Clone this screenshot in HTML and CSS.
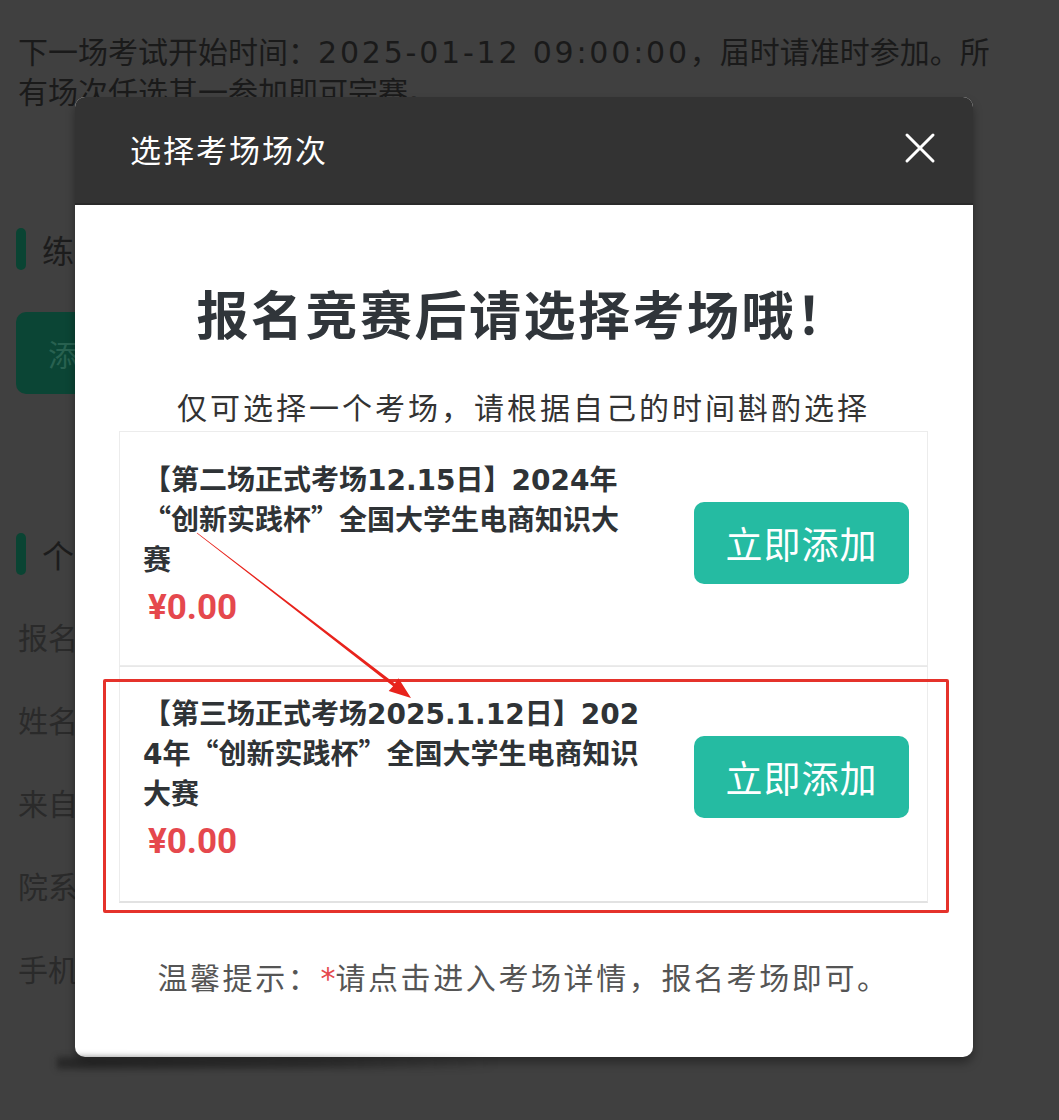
FILE: index.html
```html
<!DOCTYPE html>
<html lang="zh-CN">
<head>
<meta charset="utf-8">
<title>选择考场场次</title>
<link rel="stylesheet" href="styles.css">
</head>
<body>
<div class="page">
  <p class="notice">下一场考试开始时间：<span class="num">2025-01-12 09:00:00</span>，届时请准时参加。所有场次任选其一参加即可完赛。</p>
  <div class="section-title"><span class="bar"></span>练习考场</div>
  <div class="add-btn">添加练习考场</div>
  <div class="section-title second"><span class="bar"></span>个人信息</div>
  <ul class="info">
    <li>报名状态：已报名</li>
    <li>姓名：</li>
    <li>来自：</li>
    <li>院系：</li>
    <li>手机号：</li>
  </ul>
</div>

<div class="modal">
  <div class="modal-header">
    <span class="modal-title">选择考场场次</span>
    <svg class="close" width="32" height="32" viewBox="0 0 32 32"><path d="M3 3 L29 29 M29 3 L3 29" stroke="#fff" stroke-width="3" stroke-linecap="round" fill="none"/></svg>
  </div>
  <div class="modal-body">
    <h2 class="heading">报名竞赛后请选择考场哦！</h2>
    <p class="subtitle">仅可选择一个考场，请根据自己的时间斟酌选择</p>
    <div class="card">
      <div class="card-info">
        <div class="card-title">【第二场正式考场<span class="num">12.15</span>日】<span class="num">2024</span>年“创新实践杯”全国大学生电商知识大赛</div>
        <div class="price">¥0.00</div>
      </div>
      <div class="btn">立即添加</div>
    </div>
    <div class="card last">
      <div class="card-info">
        <div class="card-title">【第三场正式考场<span class="num">2025.1.12</span>日】<span class="num">2024</span>年“创新实践杯”全国大学生电商知识大赛</div>
        <div class="price">¥0.00</div>
      </div>
      <div class="btn">立即添加</div>
    </div>
    <p class="tip">温馨提示：<span class="star">*</span>请点击进入考场详情，报名考场即可。</p>
  </div>
  <div class="mark-frame"></div>
</div>

<svg class="arrow" width="1059" height="1120" viewBox="0 0 1059 1120">
  <polygon points="197.2,532.8 394.9,683.4 398.5,678.3 411,698 388.7,690.9 393.1,686.2 196.8,533.2" fill="#e8231c"/>
</svg>
</body>
</html>
```
FILE: styles.css
```css
* { box-sizing: border-box; }
html, body {
  margin: 0;
  padding: 0;
  background: #404040;
  width: 1059px;
  height: 1120px;
  overflow: hidden;
  font-family: "Noto Sans CJK SC", "Noto Sans", sans-serif;
}
body { position: relative; }

.page {
  padding: 30px 18px 0 18px;
}
.notice {
  margin: 0;
  width: 1000px;
  font-size: 30px;
  line-height: 40px;
  color: #1a1a1a;
}
.notice .num {
  font-family: "DejaVu Sans", sans-serif;
  letter-spacing: 2.8px;
  line-height: 1;
}
.section-title {
  display: flex;
  align-items: center;
  margin: 118px 0 0 -2px;
  height: 42px;
  font-size: 32px;
  color: #1c1c1c;
}
.section-title.second { margin-top: 139px; }
.bar {
  width: 10px;
  height: 42px;
  border-radius: 5px;
  background: #0a4433;
  margin-right: 16px;
}
.add-btn {
  margin: 42px 0 0 -2px;
  width: 300px;
  height: 82px;
  border-radius: 10px;
  background: #0b4535;
  color: #286150;
  font-size: 30px;
  display: flex;
  align-items: center;
  padding-left: 32px;
}
.info {
  list-style: none;
  margin: 20px 0 0 0;
  padding: 0;
}
.info li {
  height: 83px;
  line-height: 83px;
  font-size: 30px;
  color: #2a2a2a;
}

.modal {
  position: absolute;
  left: 75px;
  top: 97px;
  width: 898px;
  height: 960px;
  background: #fff;
  border-radius: 10px;
  box-shadow: 0 6px 10px rgba(0,0,0,0.35);
  display: flex;
  flex-direction: column;
}
.modal::after {
  content: "";
  position: absolute;
  left: -18px;
  bottom: -12px;
  width: 440px;
  height: 12px;
  background: linear-gradient(to right, rgba(20,20,20,0.55), rgba(20,20,20,0.35) 60%, rgba(20,20,20,0));
  filter: blur(3px);
  pointer-events: none;
}
.modal-header {
  height: 108px;
  background: #333333;
  border-radius: 10px 10px 0 0;
  border-bottom: 2px solid #2a2a2a;
  display: flex;
  align-items: center;
  justify-content: space-between;
  padding: 0 37px 4px 55px;
}
.modal-title {
  color: #fff;
  font-size: 31px;
  letter-spacing: 2px;
}
.close { display: block; }

.modal-body {
  padding: 0 45px 0 44px;
  display: flex;
  flex-direction: column;
}
.heading {
  margin: 78px 0 0 0;
  text-align: center;
  font-size: 52px;
  line-height: 60px;
  font-weight: 700;
  color: #30353a;
  letter-spacing: 2.5px;
}
.subtitle {
  margin: 43px 0 0 0;
  text-align: center;
  font-size: 30px;
  line-height: 40px;
  color: #333;
  letter-spacing: 3px;
}
.card {
  margin-top: 5px;
  border: 1px solid #ececec;
  display: flex;
  align-items: center;
  justify-content: space-between;
  padding: 26px 18px 37px 23px;
}
.card.last {
  margin-top: 0;
  border-top-color: #e8e8e8;
  border-bottom: 2px solid #e2e2e2;
  padding-top: 25px;
  padding-bottom: 39px;
}
.card-info {
  width: 500px;
}
.card-title {
  font-size: 28px;
  line-height: 40px;
  font-weight: 700;
  color: #2f3336;
  word-break: break-all;
}
.card-title .num {
  font-family: "DejaVu Sans", sans-serif;
  line-height: 1;
}
.price {
  margin-top: 10px;
  padding-left: 5px;
  font-family: Roboto, "Noto Sans", sans-serif;
  font-size: 35px;
  line-height: 40px;
  font-weight: 700;
  color: #e5484d;
}
.btn {
  width: 215px;
  height: 82px;
  border-radius: 10px;
  background: #25bba2;
  color: #fff;
  font-size: 37px;
  display: flex;
  align-items: center;
  justify-content: center;
  letter-spacing: 1px;
}
.tip {
  margin: 53px 0 0 0;
  text-align: center;
  font-size: 30px;
  line-height: 40px;
  color: #555;
  letter-spacing: 2.6px;
}
.star {
  color: #e5484d;
  font-family: "DejaVu Sans", sans-serif;
  letter-spacing: 0;
  line-height: 1;
}

.mark-frame {
  position: absolute;
  left: 28px;
  top: 582px;
  width: 846px;
  height: 234px;
  border: 3px solid #e5322b;
  border-radius: 2px;
  pointer-events: none;
}
.arrow {
  position: absolute;
  left: 0;
  top: 0;
  pointer-events: none;
}
```
